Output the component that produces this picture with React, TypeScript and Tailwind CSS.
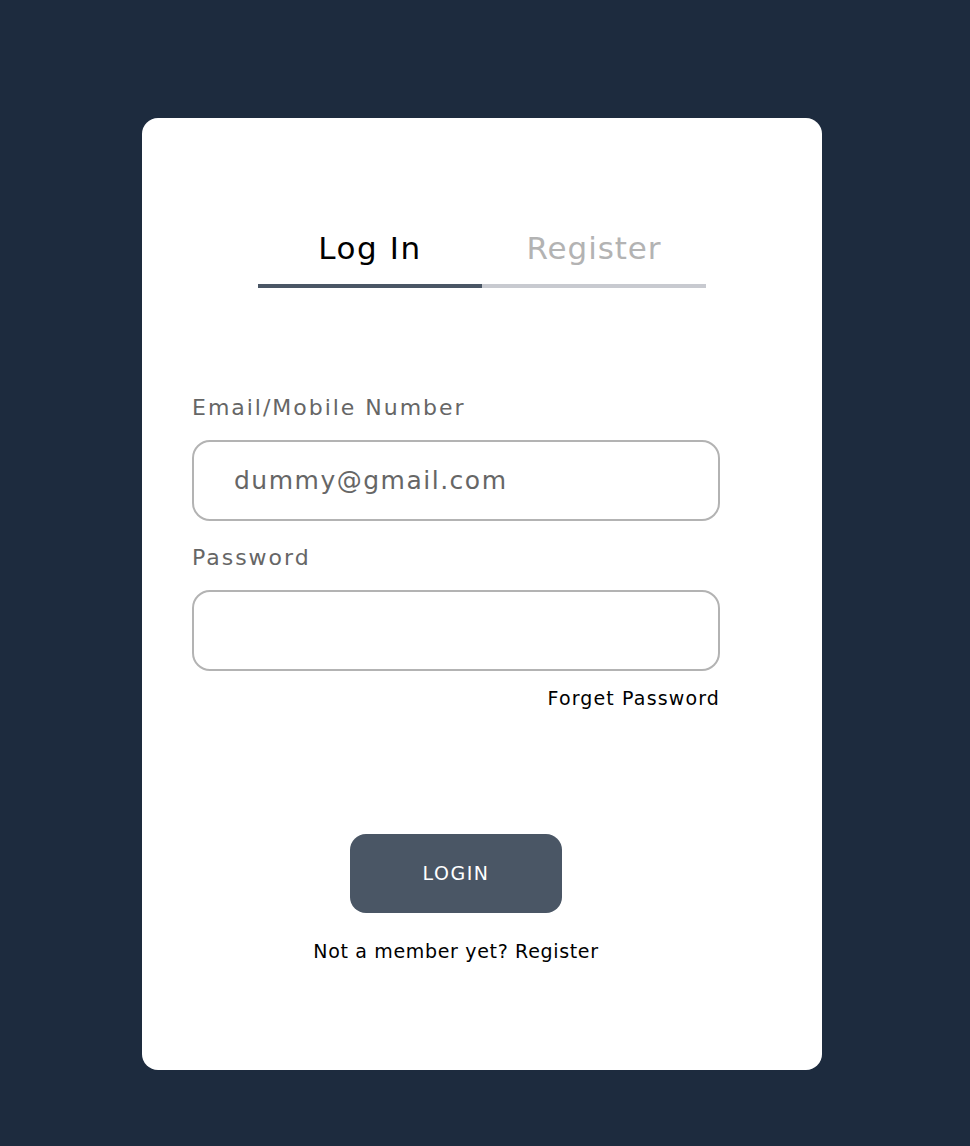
export default function App() {
  return (
    <div
      className="min-h-[1146px] w-full bg-[#1d2b3e] pt-[118px]"
      style={{ fontFamily: '"DejaVu Sans", sans-serif' }}
    >
      <div className="ml-[142px] h-[952px] w-[680px] rounded-[16px] bg-white px-[50px] pt-[110px]">
        <div className="mx-auto flex w-[448px]">
          <div className="flex w-1/2 flex-col items-center">
            <div className="h-[40px] text-[31px] leading-[40px] tracking-[0.05em] text-black">
              Log In
            </div>
            <div className="mt-[16px] h-[4px] w-full bg-[#4a5665]" />
          </div>
          <div className="flex w-1/2 flex-col items-center">
            <div className="h-[40px] text-[31px] leading-[40px] tracking-[0.03em] text-[#b3b3b3]">
              Register
            </div>
            <div className="mt-[16px] h-[4px] w-full bg-[#c8cad0]" />
          </div>
        </div>

        <div className="w-[528px]">
          <div className="mt-[106px] text-[22px] leading-[28px] tracking-[0.09em] text-[#666666]">
            Email/Mobile Number
          </div>
          <div className="mt-[18px] flex h-[81px] items-center rounded-[18px] border-2 border-[#b3b3b3] pl-[40px] text-[25px] tracking-[0.06em] text-[#666666]">
            dummy@gmail.com
          </div>

          <div className="mt-[23px] text-[22px] leading-[28px] tracking-[0.09em] text-[#666666]">
            Password
          </div>
          <div className="mt-[18px] h-[81px] rounded-[18px] border-2 border-[#b3b3b3]" />

          <div className="mt-[14px] text-right text-[19px] leading-[26px] tracking-[0.06em] text-black">
            Forget Password
          </div>

          <div className="mt-[123px] flex justify-center">
            <button
              type="button"
              className="h-[79px] w-[212px] rounded-[16px] bg-[#4a5665] text-[19px] tracking-[0.08em] text-white"
            >
              LOGIN
            </button>
          </div>

          <div className="mt-[25px] text-center text-[19px] leading-[26px] tracking-[0.035em] text-black">
            Not a member yet? Register
          </div>
        </div>
      </div>
    </div>
  );
}
